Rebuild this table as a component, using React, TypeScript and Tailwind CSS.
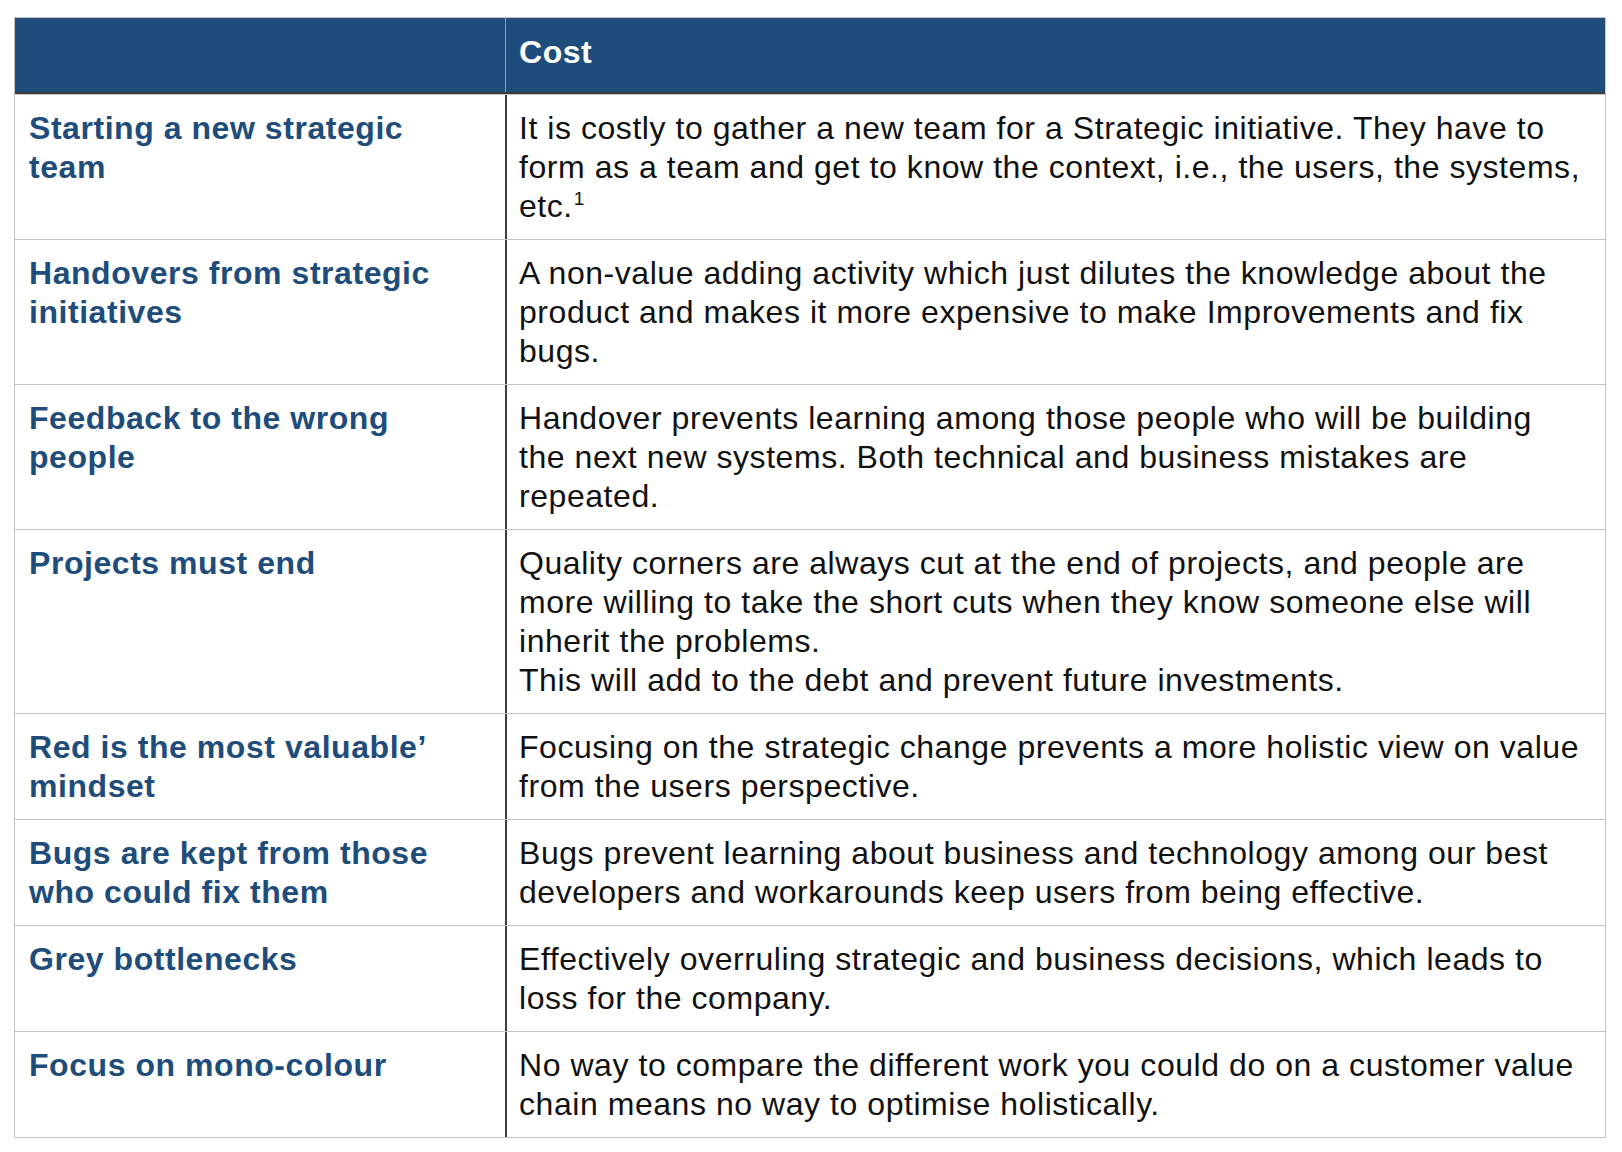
import { Fragment, ReactNode } from 'react';

interface IRow {
  title: string[];
  cost: ReactNode[];
}

const rows: IRow[] = [
  {
    title: ['Starting a new strategic', 'team'],
    cost: [
      'It is costly to gather a new team for a Strategic initiative. They have to',
      'form as a team and get to know the context, i.e., the users, the systems,',
      <>
        etc.<span className="ml-[1px] align-[12px] text-[19px] leading-[0]">1</span>
      </>,
    ],
  },
  {
    title: ['Handovers from strategic', 'initiatives'],
    cost: [
      'A non-value adding activity which just dilutes the knowledge about the',
      'product and makes it more expensive to make Improvements and fix',
      'bugs.',
    ],
  },
  {
    title: ['Feedback to the wrong', 'people'],
    cost: [
      'Handover prevents learning among those people who will be building',
      'the next new systems. Both technical and business mistakes are',
      'repeated.',
    ],
  },
  {
    title: ['Projects must end'],
    cost: [
      'Quality corners are always cut at the end of projects, and people are',
      'more willing to take the short cuts when they know someone else will',
      'inherit the problems.',
      'This will add to the debt and prevent future investments.',
    ],
  },
  {
    title: ['Red is the most valuable’', 'mindset'],
    cost: [
      'Focusing on the strategic change prevents a more holistic view on value',
      'from the users perspective.',
    ],
  },
  {
    title: ['Bugs are kept from those', 'who could fix them'],
    cost: [
      'Bugs prevent learning about business and technology among our best',
      'developers and workarounds keep users from being effective.',
    ],
  },
  {
    title: ['Grey bottlenecks'],
    cost: ['Effectively overruling strategic and business decisions, which leads to', 'loss for the company.'],
  },
  {
    title: ['Focus on mono-colour'],
    cost: [
      'No way to compare the different work you could do on a customer value',
      'chain means no way to optimise holistically.',
    ],
  },
];

const Lines = ({ lines }: { lines: ReactNode[] }) => (
  <>
    {lines.map((line, i) => (
      <Fragment key={i}>
        {i > 0 && <br />}
        {line}
      </Fragment>
    ))}
  </>
);

const CostRow = ({ title, cost }: IRow) => {
  return (
    <div className="grid grid-cols-[490px_1100px] border-t border-[#c4c4c4]">
      <div className="whitespace-nowrap pl-[14px] pt-[14px] pb-[13px] font-bold tracking-[0.55px] text-[#1f4d7b]">
        <Lines lines={title} />
      </div>
      <div className="whitespace-nowrap border-l-2 border-[#3d3d3d] pl-[12px] pt-[14px] pb-[13px] tracking-[0.55px] text-[#111]">
        <Lines lines={cost} />
      </div>
    </div>
  );
};

export default function App() {
  return (
    <div className="min-h-screen bg-white pt-[17px] pl-[14px] font-['Liberation_Sans',Arial,sans-serif] text-[32px] leading-[39px]">
      <div className="w-[1592px] border border-[#c4c4c4]">
        {/* Header */}
        <div className="grid grid-cols-[490px_1100px] bg-[#1f4d7b] border-b-2 border-[#3d3d3d]">
          <div />
          <div className="border-l border-[#8aa0b8] pl-[13px] pt-[15px] pb-[20px] font-bold tracking-[0.55px] text-white">
            Cost
          </div>
        </div>

        {rows.map((row) => (
          <CostRow key={row.title.join(' ')} {...row} />
        ))}
      </div>
    </div>
  );
}
